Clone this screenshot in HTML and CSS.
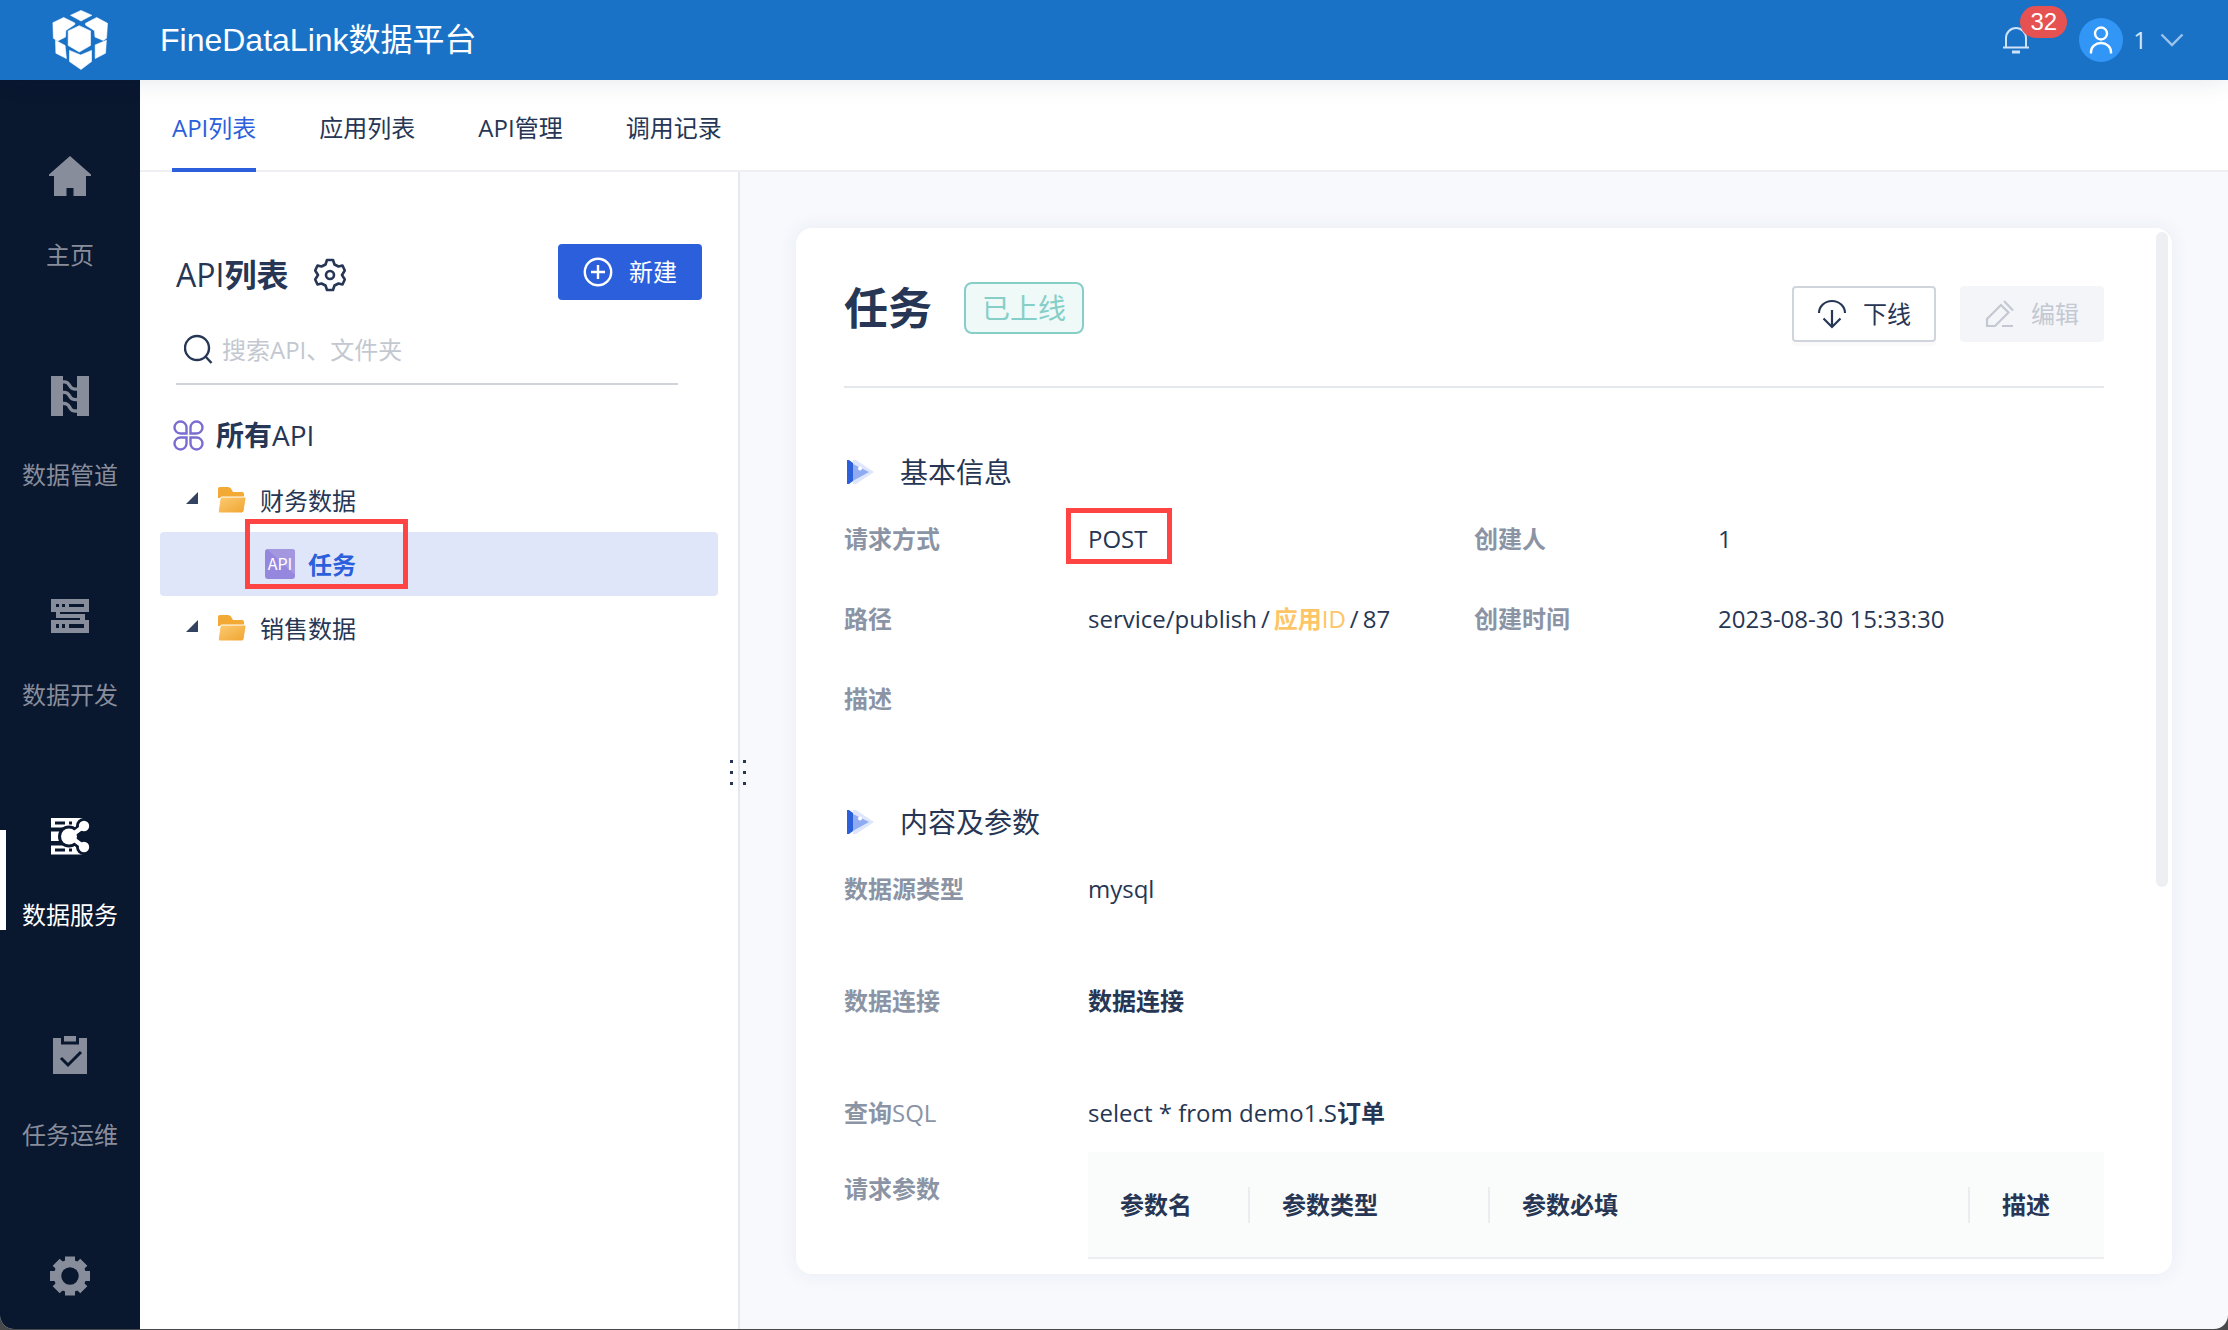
FILE: index.html
```html
<!DOCTYPE html>
<html lang="zh-CN">
<head>
<meta charset="utf-8">
<meta name="viewport" content="width=device-width, initial-scale=1">
<title>FineDataLink数据平台</title>
<link rel="stylesheet" href="styles.css">
</head>
<body>
<div class="app">
  <header class="topbar">
    <svg class="logo" viewBox="0 0 56 60" fill="#fff" stroke="#fff" stroke-width="0.6" stroke-linejoin="round">
      <path d="M18.500 5.300L29 0.400L39.800 5.300L29 11Z"/>
      <path d="M0.900 12.700L11.700 7.500L22.800 13V14.500L13.800 20.500L13.500 27L5.500 31L1.400 28.300Z"/>
      <path d="M55.500 13.300L44.700 7.500L33.500 13.300V15L42.500 20.700L43 27L51.300 30.500L54.500 28.300Z"/>
      <path d="M27.300 15.700L38.500 20.900V35.500L27.300 42L16.200 35.500V20.900Z"/>
      <path d="M3.500 30.300L13.100 35.500L14.400 48.600L3.900 43.200Z"/>
      <path d="M54.400 30.300L43.200 34.900V48.600L53.500 43.200Z"/>
      <path d="M17.500 40.400L28.700 45L39.500 40.400V51.600L29 59.500L17.500 51.600Z"/>
    </svg>
    <h1 class="brand">FineDataLink数据平台</h1>
    <div class="account">
      <button class="bell" type="button" aria-label="消息">
        <svg width="26" height="28" viewBox="0 0 26 28" fill="none" stroke="#cfe2f6" stroke-width="2"><path d="M3 21V12a10 10 0 0 1 20 0V21M0 21.500H26"/><path d="M9 26H17" stroke-width="3"/></svg>
        <span class="badge">32</span>
      </button>
      <button class="user" type="button">
        <span class="avatar"><svg width="24" height="28" viewBox="0 0 24 28" fill="none" stroke="#fff" stroke-width="2.400"><circle cx="12" cy="7.500" r="6"/><path d="M2 27.500V26a10 9 0 0 1 20 0v1.500"/></svg></span>
        <span>1</span>
        <svg class="chevron" width="24" height="14" viewBox="0 0 24 14" fill="none" stroke="#9cc3ea" stroke-width="2.400"><path d="M1.500 1.500L12 12L22.500 1.500"/></svg>
      </button>
    </div>
  </header>

  <div class="body">
    <nav class="sidebar">
      <a class="nav-item" href="#"><svg width="42" height="42" viewBox="0 0 42 42" fill="currentColor"><path d="M21 0L42 18.500V20H37V40H24.500V32H17.500V40H5V20H0V18.500Z"/></svg><span>主页</span></a>
      <a class="nav-item" href="#"><svg width="42" height="42" viewBox="0 0 42 42" fill="currentColor"><path d="M2 0H14V40H2ZM28 0H40V40H28Z"/><path d="M14 6C23 5 18 14 28 13M14 16.500C23 15.500 18 24.500 28 23.500M14 27.500C23 26.500 18 36 28 35" fill="none" stroke="currentColor" stroke-width="3.400"/></svg><span>数据管道</span></a>
      <a class="nav-item" href="#"><svg width="42" height="42" viewBox="0 0 42 42" fill="currentColor" fill-rule="evenodd"><path d="M2 3H40V16H11V18H36V24H40V37H2V24H31V22H7V16H2ZM7 8V11H10V8ZM13 8V11H16V8ZM20 8V11H35V8ZM7 28V32H10V28ZM13 28V32H16V28ZM20 28V32H35V28Z"/></svg><span>数据开发</span></a>
      <a class="nav-item active" href="#" aria-current="page"><svg width="42" height="42" viewBox="0 1 42 42" fill="currentColor"><path fill-rule="evenodd" d="M2 3H34L28 11Q25 14 20 12.500H2ZM6 6.500V9.500H16V6.500ZM20 6.500V9.500H23V6.500ZM2 16.500H11Q9 21 11 26H2ZM2 30.500H20Q25 29 28 33L34 39.500H2ZM6 33.500V36.500H16V33.500ZM20 33.500V36.500H23V33.500Z"/><path d="M21 21.500L35 11M21 21.500L35 32" stroke="#09172f" stroke-width="9"/><circle cx="35" cy="11" r="8" fill="#09172f"/><circle cx="35" cy="32" r="8" fill="#09172f"/><circle cx="20" cy="21.500" r="11" fill="#09172f"/><circle cx="20" cy="21.500" r="8"/><path d="M21 21.500L35 11M21 21.500L35 32" stroke="currentColor" stroke-width="4.500"/><circle cx="35" cy="11" r="5.200"/><circle cx="35" cy="32" r="5.200"/></svg><span>数据服务</span></a>
      <a class="nav-item" href="#"><svg width="42" height="42" viewBox="0 1 42 42" fill="currentColor"><path d="M4 3H12V9.500H30V3H38V39H4Z"/><path d="M15 1H27V6.500H15Z"/><path d="M12 23L19 30L32 17" fill="none" stroke="#09172f" stroke-width="3"/></svg><span>任务运维</span></a>
      <a class="nav-item" href="#" aria-label="设置"><svg width="42" height="42" viewBox="0 1 42 42" fill="none" stroke="currentColor"><circle cx="21" cy="21" r="12.500" stroke-width="7.500"/><g stroke-width="10"><path d="M21 1.500V8M21 34V40.500M1 21H8M34 21H41"/><path d="M7.200 7.200L12 12M30 30L34.800 34.800M34.800 7.200L30 12M12 30L7.200 34.800"/></g></svg></a>
    </nav>

    <div class="workspace">
      <nav class="tabs">
        <a class="tab selected" href="#">API列表</a>
        <a class="tab" href="#">应用列表</a>
        <a class="tab" href="#">API管理</a>
        <a class="tab" href="#">调用记录</a>
      </nav>

      <div class="columns">
        <aside class="panel">
          <div class="panel-head">
            <div class="heading">
              <h2 class="panel-title">API<b>列表</b></h2>
              <button class="icon-button" type="button" aria-label="设置"><svg width="32" height="34" viewBox="0 0 32 34" fill="none" stroke="#263654" stroke-width="2.600" stroke-linejoin="round"><path d="M13 2H19L20.500 6.500L24.500 8.500L28.500 7.500L30.800 12.500L28 17L30.800 21.500L28.500 26.500L24.500 25.500L20.500 27.500L19 32H13L11.500 27.500L7.500 25.500L3.500 26.500L1.200 21.500L4 17L1.200 12.500L3.500 7.500L7.500 8.500L11.500 6.500Z"/><circle cx="16" cy="17" r="4"/></svg></button>
            </div>
            <button class="btn primary" type="button"><svg width="30" height="30" viewBox="0 0 30 30" fill="none" stroke="#fff" stroke-width="2.400"><circle cx="15" cy="15" r="13.200"/><path d="M8 15H22M15 8V22"/></svg>新建</button>
          </div>
          <label class="search">
            <svg width="30" height="30" viewBox="0 0 30 30" fill="none" stroke="#263654" stroke-width="2.400"><circle cx="13" cy="14" r="12"/><path d="M21.500 22.500L27.500 29"/></svg>
            <input type="text" placeholder="搜索API、文件夹" aria-label="搜索">
          </label>
          <div class="all">
            <svg width="32" height="32" viewBox="0 0 32 32" fill="none" stroke="#7a6cd0" stroke-width="2.400"><path d="M14.500 14.500H8.500A6 6 0 1 1 14.500 8.500ZM18.500 14.500H24.500A6 6 0 1 0 18.500 8.500ZM14.500 18.500H8.500A6 6 0 1 0 14.500 24.500ZM18.500 18.500H24.500A6 6 0 1 1 18.500 24.500Z"/></svg>
            <span><b>所有</b>API</span>
          </div>
          <ul class="tree">
            <li class="node">
              <svg class="caret" width="12" height="12" viewBox="0 0 12 12"><path d="M12 0V12H0Z" fill="#33425f"/></svg>
              <svg class="folder" width="30" height="28" viewBox="0 0 30 28"><path d="M1 3Q1 1 3 1H11Q13 1 14 2.500L16 6H25Q27 6 27 8V12H1V25Z" fill="#f3aa35"/><path d="M5 11H27.500Q29.500 11 29 13L27 25Q26.500 27 24.500 27H3Q1 27 1.300 25L3 13Q3.300 11 5 11Z" fill="url(#f)" stroke="#fff" stroke-width="1"/></svg>
              <span>财务数据</span>
            </li>
            <li class="node leaf current">
              <svg width="30" height="30" viewBox="0 0 30 30"><rect width="30" height="30" rx="3" fill="#9587de"/><path d="M2 0H28L30 2V26Z" fill="#a397e0"/><text x="15" y="20.500" text-anchor="middle" class="api-mark">API</text></svg>
              <b>任务</b>
              <i class="mark mark-node"></i>
            </li>
            <li class="node">
              <svg class="caret" width="12" height="12" viewBox="0 0 12 12"><path d="M12 0V12H0Z" fill="#33425f"/></svg>
              <svg class="folder" width="30" height="28" viewBox="0 0 30 28"><defs><linearGradient id="f" x1="0" y1="0" x2="1" y2="1"><stop offset="0" stop-color="#fccb74"/><stop offset="1" stop-color="#f0a42f"/></linearGradient></defs><path d="M1 3Q1 1 3 1H11Q13 1 14 2.500L16 6H25Q27 6 27 8V12H1V25Z" fill="#f3aa35"/><path d="M5 11H27.500Q29.500 11 29 13L27 25Q26.500 27 24.500 27H3Q1 27 1.300 25L3 13Q3.300 11 5 11Z" fill="url(#f)" stroke="#fff" stroke-width="1"/></svg>
              <span>销售数据</span>
            </li>
          </ul>
          <svg class="grip" width="18" height="26" viewBox="0 0 18 26" fill="#263654"><path d="M1 0h3v3h-3zM1 11h3v3h-3zM1 22h3v3h-3zM14 0h3v3h-3zM14 11h3v3h-3zM14 22h3v3h-3z"/></svg>
        </aside>

        <main class="content">
          <article class="card">
            <div class="card-head">
              <h2 class="title">任务</h2>
              <span class="tag">已上线</span>
              <div class="actions">
                <button class="btn plain" type="button"><svg width="30" height="30" viewBox="0 0 30 30" fill="none" stroke="#263654" stroke-width="2.200"><path d="M2 14A13 12 0 0 1 28 14M15 11V28M6.500 19.500L15 28L23.500 19.500"/></svg>下线</button>
                <button class="btn muted" type="button" disabled><svg width="30" height="30" viewBox="0 0 30 30" fill="none" stroke="#c3c8d2" stroke-width="2.200"><path d="M2 27V20L16 6L23.500 13.500L10 27ZM19 2L28 11.500M17 27H28"/></svg>编辑</button>
              </div>
            </div>

            <section class="section basic">
              <h3 class="section-title"><svg width="30" height="26" viewBox="0 0 30 26"><path d="M9 1H12L30 13L12 25H9Z" fill="#dde6fb"/><path d="M5 3L25 13L5 24Z" fill="#8fabf2"/><path d="M3 1H5L9 4V22L5 25H3Z" fill="#2c5fdb"/><circle cx="16" cy="9.500" r="2" fill="#fff"/></svg>基本信息</h3>
              <dl class="pairs">
                <div><dt>请求方式</dt><dd class="boxed">POST<i class="mark mark-method"></i></dd></div>
                <div><dt>创建人</dt><dd>1</dd></div>
                <div><dt>路径</dt><dd class="path"><span>service/publish</span><span>/</span><span class="app-id"><b>应用</b>ID</span><span>/</span><span>87</span></dd></div>
                <div><dt>创建时间</dt><dd>2023-08-30 15:33:30</dd></div>
                <div><dt>描述</dt><dd></dd></div>
              </dl>
            </section>

            <section class="section">
              <h3 class="section-title"><svg width="30" height="26" viewBox="0 0 30 26"><path d="M9 1H12L30 13L12 25H9Z" fill="#dde6fb"/><path d="M5 3L25 13L5 24Z" fill="#8fabf2"/><path d="M3 1H5L9 4V22L5 25H3Z" fill="#2c5fdb"/><circle cx="16" cy="9.500" r="2" fill="#fff"/></svg>内容及参数</h3>
              <dl class="rows">
                <div><dt>数据源类型</dt><dd>mysql</dd></div>
                <div><dt>数据连接</dt><dd><b>数据连接</b></dd></div>
                <div><dt>查询<span class="thin">SQL</span></dt><dd>select * from demo1.S<b>订单</b></dd></div>
                <div class="params"><dt>请求参数</dt><dd>
                  <table class="table">
                    <colgroup><col class="c1"><col class="c2"><col class="c3"><col></colgroup>
                    <thead><tr><th scope="col"><span>参数名</span></th><th scope="col"><span>参数类型</span></th><th scope="col"><span>参数必填</span></th><th scope="col"><span>描述</span></th></tr></thead>
                  </table>
                </dd></div>
              </dl>
            </section>
            <span class="scroll-thumb"></span>
          </article>
        </main>
      </div>
    </div>
  </div>
</div>
</body>
</html>
```

FILE: styles.css
```css
* { box-sizing: border-box; }

body {
  margin: 0;
  background: #48494b;
  color: #263654;
  font: 24px/36px "Open Sans", "Noto Sans CJK SC", sans-serif;
}

h1, h2, h3, dl, dd, ul { margin: 0; padding: 0; }
button, input { font: inherit; color: inherit; }
button { border: 0; background: none; padding: 0; }
a { color: inherit; text-decoration: none; }
svg { display: block; flex: none; }
b { font-weight: 700; }

.app {
  display: flex;
  flex-direction: column;
  height: calc(100vh - 1px);
  border-radius: 0 0 14px 14px;
  overflow: hidden;
  background: #f7f9fd;
}

/* Top bar */
.topbar {
  display: flex;
  align-items: center;
  flex: none;
  height: 80px;
  padding: 0 44px 0 52px;
  background: #1a72c7;
  color: #fff;
  box-shadow: 0 0 24px rgba(20, 50, 70, .12);
  position: relative;
  z-index: 1;
}
.logo { width: 56px; height: 60px; }
.brand {
  margin-left: 52px;
  font: 400 32px/48px "Liberation Sans", "Noto Sans CJK SC", sans-serif;
}
.account { display: flex; align-items: center; gap: 50px; margin-left: auto; }
.bell { position: relative; }
.badge {
  position: absolute;
  left: 17px;
  top: -20px;
  width: 47px;
  border-radius: 16px;
  background: #e65251;
  font: 24px/32px "Liberation Sans", sans-serif;
}
.user { display: flex; align-items: center; gap: 10px; color: #dbe9f8; }
.avatar {
  display: grid;
  place-items: center;
  width: 44px;
  height: 44px;
  border-radius: 50%;
  background: #3296f7;
}
.chevron { margin-left: 3px; }

.body { display: flex; flex: 1; min-height: 0; }

/* Side navigation */
.sidebar {
  flex: none;
  width: 140px;
  padding-top: 26px;
  background: #09172f;
  color: #888d9b;
  overflow: hidden;
}
.nav-item {
  display: flex;
  flex-direction: column;
  align-items: center;
  gap: 39px;
  height: 220px;
  padding-top: 50px;
  position: relative;
}
.nav-item.active { color: #fff; }
.nav-item.active::before {
  content: "";
  position: absolute;
  left: 0;
  top: 64px;
  width: 6px;
  height: 100px;
  background: #fff;
}

/* Tabs */
.workspace { display: flex; flex-direction: column; flex: 1; min-width: 0; }
.tabs {
  display: flex;
  gap: 63px;
  flex: none;
  height: 92px;
  padding: 0 32px;
  border-bottom: 2px solid #eeeff2;
  background: #fff;
}
.tab { height: 92px; padding-top: 30px; }
.tab.selected { border-bottom: 4px solid #2c5fdb; color: #2c5fdb; }

.columns { display: flex; flex: 1; min-height: 0; }

/* API tree */
.panel {
  position: relative;
  flex: none;
  width: 600px;
  padding: 72px 20px 0;
  border-right: 2px solid #e5e8ef;
  background: #fff;
}
.panel-head { display: flex; align-items: center; padding: 0 16px; }
.heading { display: flex; align-items: center; gap: 26px; padding-top: 5px; }
.panel-title { font-size: 32px; line-height: 48px; font-weight: 500; }
.btn {
  display: flex;
  align-items: center;
  justify-content: center;
  gap: 16px;
  width: 144px;
  height: 56px;
  border-radius: 4px;
}
.btn.primary { margin-left: auto; background: #2c5fdb; color: #fff; }
.search {
  display: flex;
  align-items: center;
  gap: 8px;
  height: 70px;
  margin: 15px 40px 0 16px;
  padding-left: 8px;
  border-bottom: 2px solid #d0d3dc;
}
.search input { flex: 1; min-width: 0; padding: 2px 0 0; border: 0; outline: 0; background: none; }
.search input::placeholder { color: #c3c8d0; opacity: 1; }
.all {
  display: flex;
  align-items: center;
  gap: 12px;
  height: 64px;
  margin: 18px 0 0 12px;
  font-size: 28px;
  font-weight: 500;
}
.tree { margin-top: 1px; list-style: none; }
.node {
  position: relative;
  display: flex;
  align-items: center;
  height: 64px;
  padding-left: 26px;
  border-radius: 4px;
}
.node > span, .node > b { padding-top: 2px; }
.caret { margin-bottom: 4px; }
.folder { margin: 0 13px 0 19px; }
.leaf { gap: 13px; padding-left: 105px; }
.current { background: #e0e6fa; color: #2c5fdb; }
.api-mark { font: 16px "Noto Sans CJK SC", sans-serif; fill: #fff; }
.grip { position: absolute; right: -9px; top: calc(50% + 9px); }

/* Highlight frames over the fields */
.mark { position: absolute; border: 5px solid #ff4444; }
.mark-node { left: 85px; top: -13px; width: 163px; height: 70px; }
.mark-method { left: -22px; top: -13px; width: 106px; height: 56px; }

/* Detail card */
.content { flex: 1; min-width: 0; padding: 56px 56px 55px; }
.card {
  position: relative;
  height: 100%;
  padding: 46px 68px 0 48px;
  border-radius: 16px;
  background: #fff;
  box-shadow: 0 0 20px rgba(40, 50, 90, .07);
}
.card-head {
  display: flex;
  align-items: center;
  height: 114px;
  padding-bottom: 44px;
  border-bottom: 2px solid #e4e8ed;
}
.title { font-size: 44px; line-height: 64px; font-weight: 700; }
.tag {
  margin-left: 32px;
  padding: 0 16px;
  border: 2px solid #86cfc8;
  border-radius: 8px;
  background: #eff9f8;
  color: #86cfc8;
  font-size: 28px;
  line-height: 48px;
}
.actions { display: flex; gap: 24px; margin: 12px 0 0 auto; }
.plain { border: 2px solid #d0d4dc; box-shadow: 0 4px 0 rgba(0, 0, 0, .02); }
.muted { background: #f4f5f8; color: #c3c8d2; }

.section-title {
  display: flex;
  align-items: center;
  gap: 26px;
  font-size: 28px;
  line-height: 40px;
  font-weight: 400;
}
.basic { padding: 64px 0 85px; }
dt { width: 244px; flex: none; color: #8b94a5; font-weight: 700; }
dd { font-weight: 500; }
.thin { font-weight: 400; }
.pairs {
  display: grid;
  grid-template-columns: 1fr 1fr;
  row-gap: 44px;
  margin-top: 29px;
}
.pairs > div, .rows > div { display: flex; }
.boxed { position: relative; }
.path { display: flex; gap: 4px; }
.app-id { color: #fdc567; }
.rows { display: flex; flex-direction: column; gap: 76px; margin-top: 29px; }
.rows .params { margin-top: -55px; }
.params dt { padding-top: 19px; }
.params dd { flex: 1; }
.table {
  width: 100%;
  table-layout: fixed;
  border-collapse: collapse;
  background: #fafbfb;
}
.c1 { width: 160px; }
.c2 { width: 240px; }
.c3 { width: 480px; }
.table th {
  height: 106px;
  padding: 0 0 0 32px;
  border-bottom: 2px solid #ecedf0;
  text-align: left;
}
.table th + th { padding-left: 0; }
.table th + th span { display: block; padding-left: 32px; border-left: 2px solid #ecedf0; }
.scroll-thumb {
  position: absolute;
  right: 4px;
  top: 4px;
  bottom: 37%;
  width: 12px;
  border-radius: 6px;
  background: #eeeff3;
}
```
